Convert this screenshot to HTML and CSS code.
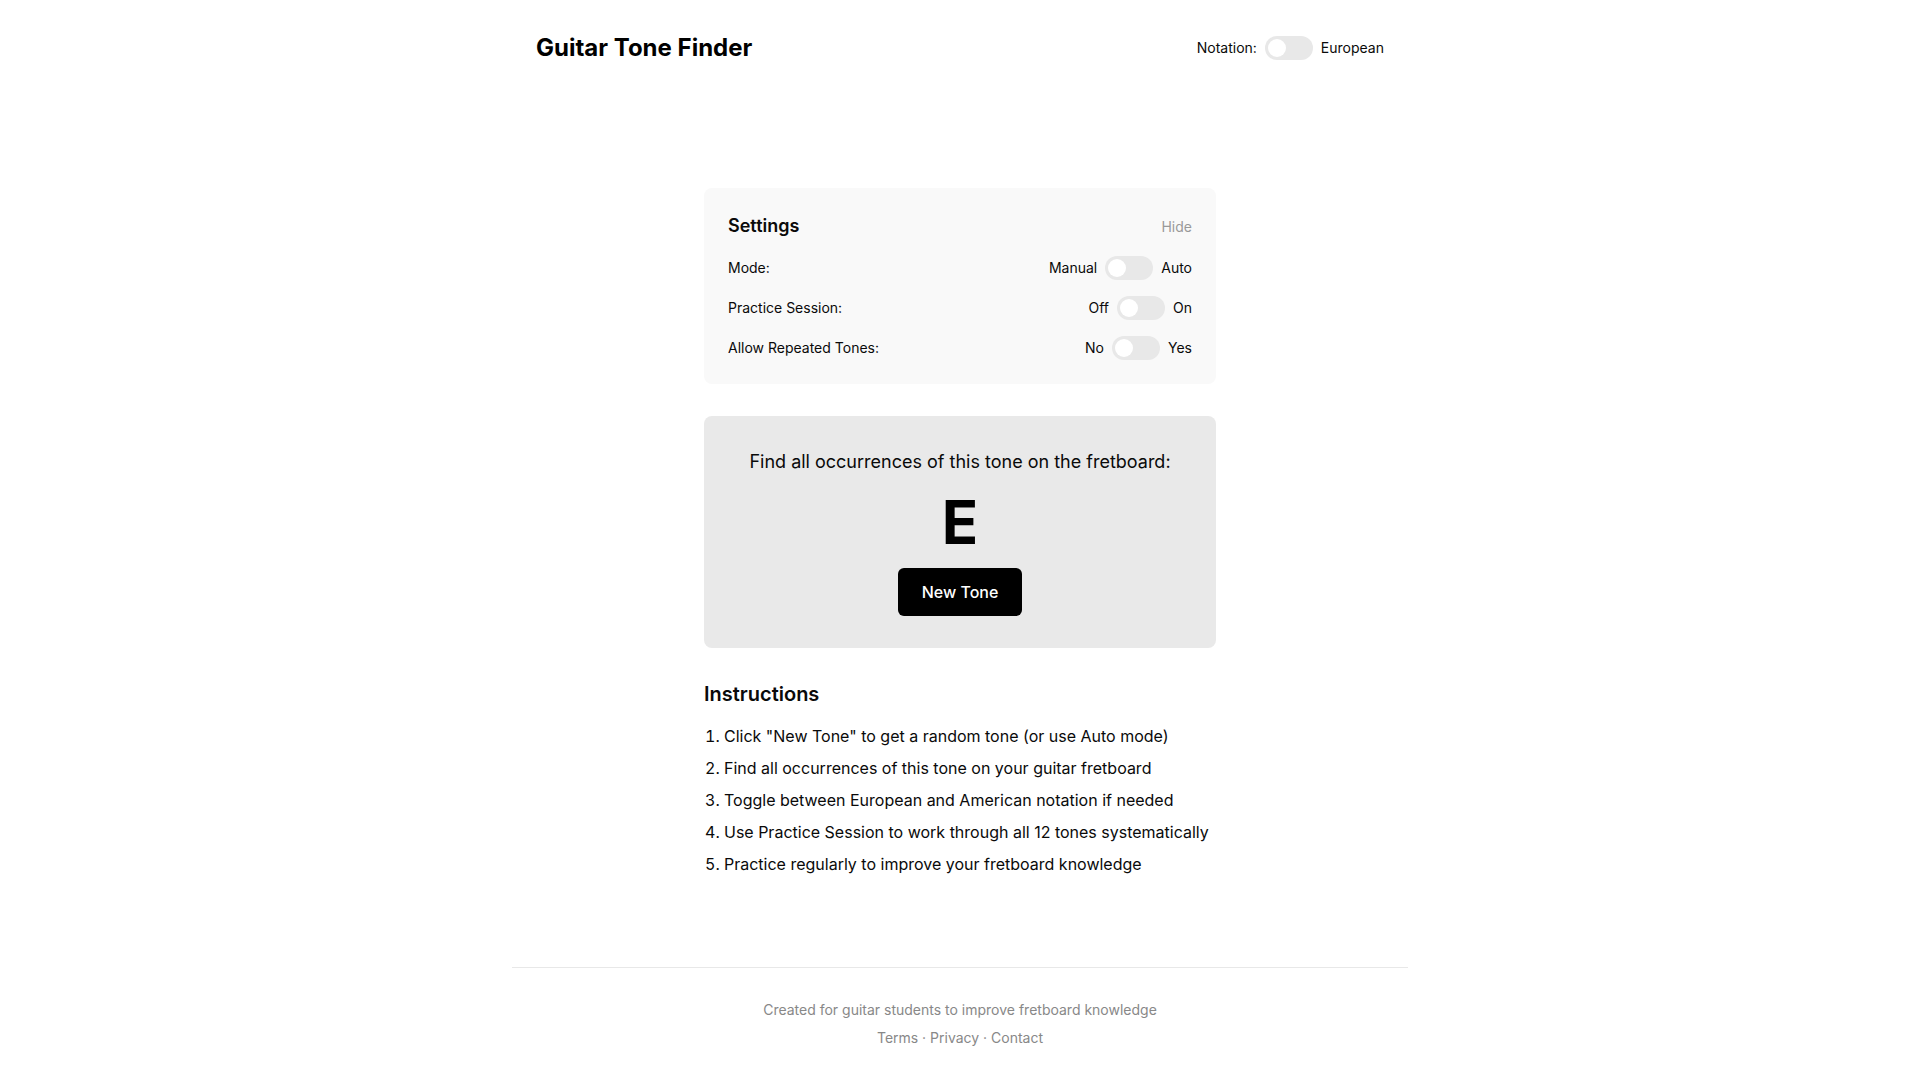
FILE: index.html
```html
<!DOCTYPE html>
<html lang="en">
<head>
<meta charset="utf-8">
<title>Guitar Tone Finder</title>
<link rel="stylesheet" href="styles.css">
</head>
<body>
<div class="page">
  <header class="header">
    <h1 class="brand">Guitar Tone Finder</h1>
    <div class="notation">
      <span>Notation:</span>
      <span class="toggle"><span class="knob"></span></span>
      <span>European</span>
    </div>
  </header>

  <main class="main">
    <section class="card settings">
      <div class="settings-head">
        <h2 class="settings-title">Settings</h2>
        <span class="hide">Hide</span>
      </div>
      <div class="row">
        <span>Mode:</span>
        <div class="switch">
          <span>Manual</span>
          <span class="toggle"><span class="knob"></span></span>
          <span>Auto</span>
        </div>
      </div>
      <div class="row">
        <span>Practice Session:</span>
        <div class="switch">
          <span>Off</span>
          <span class="toggle"><span class="knob"></span></span>
          <span>On</span>
        </div>
      </div>
      <div class="row">
        <span>Allow Repeated Tones:</span>
        <div class="switch">
          <span>No</span>
          <span class="toggle"><span class="knob"></span></span>
          <span>Yes</span>
        </div>
      </div>
    </section>

    <section class="card tone">
      <p class="prompt">Find all occurrences of this tone on the fretboard:</p>
      <div class="note">E</div>
      <button class="btn">New Tone</button>
    </section>

    <section class="instructions">
      <h2 class="instr-title">Instructions</h2>
      <ol class="steps">
        <li>Click "New Tone" to get a random tone (or use Auto mode)</li>
        <li>Find all occurrences of this tone on your guitar fretboard</li>
        <li>Toggle between European and American notation if needed</li>
        <li>Use Practice Session to work through all 12 tones systematically</li>
        <li>Practice regularly to improve your fretboard knowledge</li>
      </ol>
    </section>
  </main>

  <footer class="footer">
    <p class="foot-line">Created for guitar students to improve fretboard knowledge</p>
    <p class="foot-links">Terms · Privacy · Contact</p>
  </footer>
</div>
</body>
</html>
```

FILE: styles.css
```css
* { box-sizing: border-box; }
html, body { margin: 0; padding: 0; background: #fff; }
body {
  font-family: Inter, "Noto Sans", "Liberation Sans", sans-serif;
  color: #0a0a0a;
}
.page {
  max-width: 896px;
  margin: 0 auto;
}
.header {
  display: flex;
  justify-content: space-between;
  align-items: center;
  padding: 32px 24px;
}
.brand {
  margin: 0;
  font-size: 24px;
  line-height: 32px;
  font-weight: 700;
  color: #000;
}
.notation {
  display: flex;
  align-items: center;
  gap: 8px;
  font-size: 14px;
  line-height: 20px;
}
.toggle {
  position: relative;
  display: inline-block;
  width: 48px;
  height: 24px;
  border-radius: 12px;
  background: #e8e8e8;
}
.knob {
  position: absolute;
  left: 3px;
  top: 3px;
  width: 18px;
  height: 18px;
  border-radius: 50%;
  background: #fff;
}
.main {
  width: 512px;
  margin: 92px auto 0;
  display: flex;
  flex-direction: column;
}
.card {
  border-radius: 8px;
}
.settings {
  background: #f9f9f9;
  padding: 24px;
  display: flex;
  flex-direction: column;
  gap: 16px;
}
.settings-head {
  display: flex;
  justify-content: space-between;
  align-items: center;
}
.settings-title {
  margin: 0;
  font-size: 18px;
  line-height: 28px;
  font-weight: 600;
}
.hide {
  font-size: 14px;
  color: #999;
}
.row {
  display: flex;
  justify-content: space-between;
  align-items: center;
  font-size: 14px;
  line-height: 20px;
}
.switch {
  display: flex;
  align-items: center;
  gap: 8px;
}
.tone {
  margin-top: 32px;
  background: #e9e9e9;
  padding: 32px;
  display: flex;
  flex-direction: column;
  align-items: center;
}
.prompt {
  margin: 0;
  font-size: 18px;
  line-height: 28px;
}
.note {
  margin-top: 16px;
  font-size: 60px;
  line-height: 60px;
  font-weight: 700;
  color: #000;
}
.btn {
  margin-top: 16px;
  font-family: inherit;
  font-size: 16px;
  line-height: 24px;
  font-weight: 500;
  color: #fff;
  background: #000;
  border: 0;
  border-radius: 6px;
  padding: 12px 24px;
}
.instructions {
  margin-top: 32px;
}
.instr-title {
  margin: 0;
  font-size: 20px;
  line-height: 28px;
  font-weight: 600;
}
.steps {
  margin: 16px 0 0;
  padding: 0 0 0 1px;
  list-style: decimal inside;
  display: flex;
  flex-direction: column;
  gap: 8px;
  font-size: 16px;
  line-height: 24px;
}
.footer {
  margin-top: 91px;
  border-top: 1px solid #e8e8e8;
  padding: 32px 0;
  text-align: center;
  font-size: 14px;
  line-height: 20px;
  color: #888;
}
.foot-line { margin: 0 0 8px; }
.foot-links { margin: 0; }
```
